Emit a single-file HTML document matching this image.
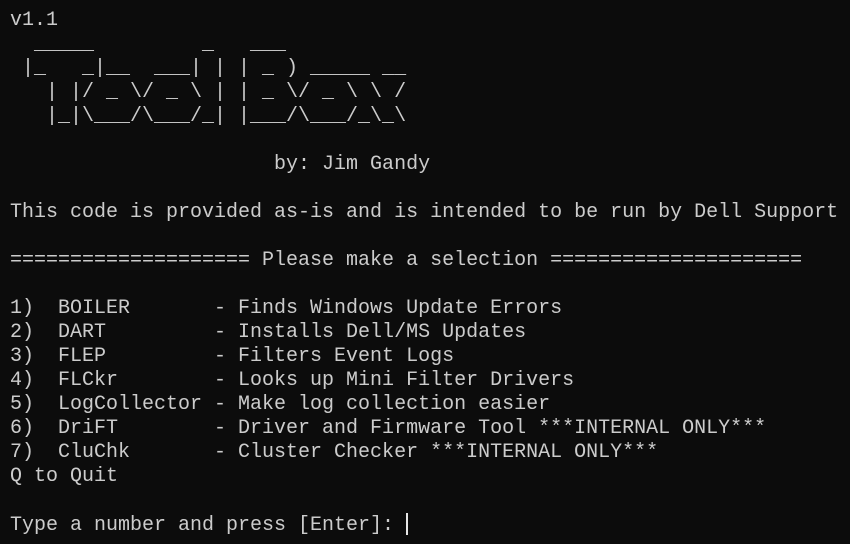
<!DOCTYPE html>
<html><head><meta charset="utf-8"><style>
html,body{margin:0;padding:0;background:#0c0c0c;width:850px;height:544px;overflow:hidden}
pre{margin:0;position:absolute;left:10px;top:9px;font-family:"Liberation Mono",monospace;font-size:20px;line-height:24px;color:#cccccc;white-space:pre}
.cur{display:inline-block;width:1.5px;height:22px;background:#e6e6e6;vertical-align:-5px;margin-left:0px}
</style></head><body><pre>v1.1
  _____         _   ___
 |_   _|__  ___| | | _ ) _____ __
   | |/ _ \/ _ \ | | _ \/ _ \ \ /
   |_|\___/\___/_| |___/\___/_\_\

                      by: Jim Gandy

This code is provided as-is and is intended to be run by Dell Support

==================== Please make a selection =====================

1)  BOILER       - Finds Windows Update Errors
2)  DART         - Installs Dell/MS Updates
3)  FLEP         - Filters Event Logs
4)  FLCkr        - Looks up Mini Filter Drivers
5)  LogCollector - Make log collection easier
6)  DriFT        - Driver and Firmware Tool ***INTERNAL ONLY***
7)  CluChk       - Cluster Checker ***INTERNAL ONLY***
Q to Quit

Type a number and press [Enter]: <span class="cur"></span></pre></body></html>
